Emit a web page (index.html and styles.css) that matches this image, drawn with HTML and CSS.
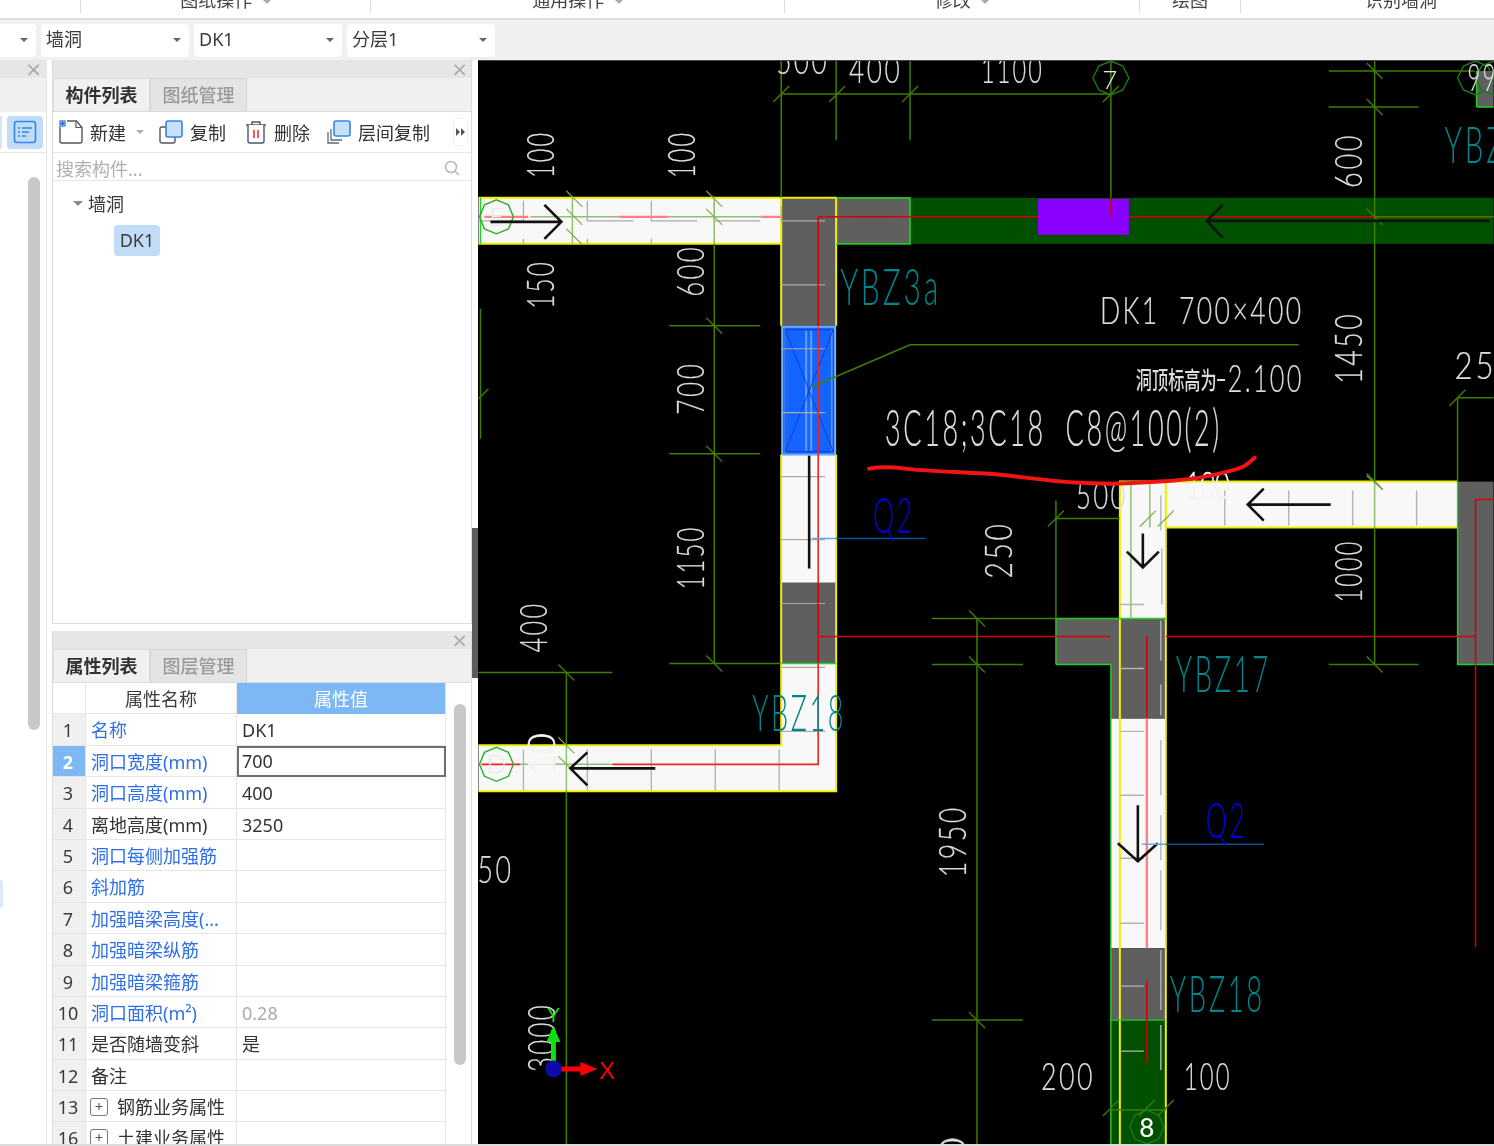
FILE: index.html
```html
<!DOCTYPE html>
<html lang="zh-CN">
<head>
<meta charset="utf-8">
<title>墙洞</title>
<link rel="stylesheet" href="styles.css">
</head>
<body>
<div class="app">
  <header class="ribbon">
    <div class="rgroup g0"></div>
    <div class="rgroup g1"><span class="rlabel">图纸操作 <i class="caret"></i></span></div>
    <div class="rgroup g2"><span class="rlabel">通用操作 <i class="caret"></i></span></div>
    <div class="rgroup g3"><span class="rlabel">修改 <i class="caret"></i></span></div>
    <div class="rgroup g4"><span class="rlabel">绘图</span></div>
    <div class="rgroup g5"><span class="rlabel">识别墙洞</span></div>
  </header>
  <div class="selbar">
    <div class="sel sel0"><i class="caret dark"></i></div>
    <div class="sel"><span>墙洞</span><i class="caret dark"></i></div>
    <div class="sel"><span>DK1</span><i class="caret dark"></i></div>
    <div class="sel"><span>分层1</span><i class="caret dark"></i></div>
  </div>
  <main class="work">
    <aside class="strip">
      <div class="phead strip-head"><span class="close">×</span></div>
      <div class="strip-tabs"></div>
      <div class="strip-tool">
        <span class="sliver"></span>
        <span class="navbtn">
          <svg width="24" height="24" viewBox="0 0 24 24"><rect x="1.5" y="1.5" width="21" height="21" rx="2.5" fill="none" stroke="#2f86f0" stroke-width="1.6"/><path d="M5 8h2M9 8h10M5 12h2M9 12h7M5 16h2M9 16h4" stroke="#2f86f0" stroke-width="1.6" fill="none"/></svg>
        </span>
      </div>
      <div class="strip-body">
        <span class="strip-thumb"></span>
        <span class="strip-mark"></span>
      </div>
    </aside>
    <div class="panels">
      <section class="panel listpanel">
        <div class="phead"><span class="close">×</span></div>
        <div class="tabs"><span class="tab on">构件列表</span><span class="tab">图纸管理</span></div>
        <div class="tools">
          <span class="tool">
            <svg class="ico" width="24" height="24" viewBox="0 0 24 24"><path d="M1 6V21a2 2 0 0 0 2 2H21a2 2 0 0 0 2-2V7.5L17.5 1H8" fill="#fff" stroke="#556" stroke-width="1.4"/><path d="M17 1.5V7.5H23" fill="none" stroke="#556" stroke-width="1.2"/><rect x="0" y="0" width="7" height="7" fill="#8db8f0"/><path d="M1 1l5 5M6 1L1 6M3.5 0v7M0 3.5h7" stroke="#2a6fe0" stroke-width=".8"/></svg>
            新建<i class="caret gap"></i>
          </span>
          <span class="tool">
            <svg class="ico" width="24" height="24" viewBox="0 0 24 24"><rect x="1" y="7" width="15" height="16" rx="2" fill="#fff" stroke="#556" stroke-width="1.4"/><rect x="7" y="1" width="16" height="16" rx="2" fill="#c9dffa" stroke="#2f86f0" stroke-width="1.6"/></svg>
            复制
          </span>
          <span class="tool">
            <svg class="ico" width="22" height="24" viewBox="0 0 22 24"><path d="M1 5H21M7 5V2H15V5" fill="none" stroke="#556" stroke-width="1.4"/><path d="M3 5V21a2 2 0 0 0 2 2H17a2 2 0 0 0 2-2V5" fill="#fff" stroke="#556" stroke-width="1.4"/><path d="M9 10V18M13 10V18" stroke="#e33" stroke-width="1.6"/></svg>
            删除
          </span>
          <span class="tool">
            <svg class="ico" width="24" height="24" viewBox="0 0 24 24"><path d="M1 12V23H12M4 9V20H15" fill="none" stroke="#667" stroke-width="1.3"/><rect x="7" y="1" width="16" height="15" rx="2" fill="#c9dffa" stroke="#2f86f0" stroke-width="1.6"/></svg>
            层间复制
          </span>
          <span class="more"><i></i><i></i></span>
        </div>
        <div class="search">
          <span class="ph">搜索构件...</span>
          <svg width="16" height="16" viewBox="0 0 16 16"><circle cx="7" cy="7" r="5.5" fill="none" stroke="#bbb" stroke-width="1.6"/><path d="M11 11l4 4" stroke="#bbb" stroke-width="1.6"/></svg>
        </div>
        <div class="tree">
          <div class="node"><i class="caret dark"></i>墙洞</div>
          <div class="leaf"><span class="chip">DK1</span></div>
        </div>
      </section>
      <div class="gutter"></div>
      <section class="panel proppanel">
        <div class="phead"><span class="close">×</span></div>
        <div class="tabs"><span class="tab on">属性列表</span><span class="tab">图层管理</span></div>
        <div class="tablewrap">
          <div class="grid">
            <div class="c num hd"></div><div class="c name hd">属性名称</div><div class="c val hdv">属性值</div>
            <div class="c num">1</div><div class="c name blue">名称</div><div class="c val">DK1</div>
            <div class="c num cur">2</div><div class="c name blue">洞口宽度(mm)</div><div class="c val edit">700</div>
            <div class="c num">3</div><div class="c name blue">洞口高度(mm)</div><div class="c val">400</div>
            <div class="c num">4</div><div class="c name">离地高度(mm)</div><div class="c val">3250</div>
            <div class="c num">5</div><div class="c name blue">洞口每侧加强筋</div><div class="c val"></div>
            <div class="c num">6</div><div class="c name blue">斜加筋</div><div class="c val"></div>
            <div class="c num">7</div><div class="c name blue">加强暗梁高度(...</div><div class="c val"></div>
            <div class="c num">8</div><div class="c name blue">加强暗梁纵筋</div><div class="c val"></div>
            <div class="c num">9</div><div class="c name blue">加强暗梁箍筋</div><div class="c val"></div>
            <div class="c num">10</div><div class="c name blue">洞口面积(m²)</div><div class="c val muted">0.28</div>
            <div class="c num">11</div><div class="c name">是否随墙变斜</div><div class="c val">是</div>
            <div class="c num">12</div><div class="c name">备注</div><div class="c val"></div>
            <div class="c num">13</div><div class="c name"><span class="plus">+</span>钢筋业务属性</div><div class="c val"></div>
            <div class="c num">16</div><div class="c name"><span class="plus">+</span>土建业务属性</div><div class="c val"></div>
          </div>
          <div class="vscroll"><span class="thumb"></span></div>
        </div>
      </section>
    </div>
    <div class="split"><span class="grip"></span></div>
    <svg class="cad" width="1016" height="1084" viewBox="478 60 1016 1084" xmlns="http://www.w3.org/2000/svg">
      <rect x="478" y="60" width="1016" height="1086" fill="#000"/>

      <!-- walls: white -->
      <g class="wall">
        <rect x="478" y="197" width="303" height="46"/>
        <path d="M478 745H781V453H836V791H478Z"/>
        <path d="M1166 481H1458V527H1166V618H1120V527 481Z"/>
        <rect x="1111" y="718" width="55" height="230"/>
      </g>
      <!-- grey columns -->
      <g class="col">
        <rect x="781" y="197" width="55" height="128"/>
        <rect x="781" y="582" width="55" height="81"/>
        <path d="M1056 618H1166V718H1111V664H1056Z"/>
        <rect x="1111" y="948" width="55" height="72"/>
        <rect x="1458" y="481" width="36" height="183"/>
        <rect x="1477" y="70" width="17" height="36"/>
      </g>
      <rect class="colg" x="836" y="197" width="74" height="46"/>
      <rect class="beam" x="910" y="197" width="584" height="46"/>
      <rect class="beam" x="1111" y="1020" width="55" height="126"/>
      <rect class="hole" x="1038" y="198" width="91" height="36"/>

      <!-- blue selected door hole -->
      <rect class="sel-hole" x="782" y="326" width="53" height="128"/>
      <path class="sel-light" d="M785 328V452M832 328V452M806 330V450M811 330V450"/>
      <path class="sel-inner" d="M785 329H833V451H785ZM785 329L833 451M833 329L785 451"/>

      <!-- yellow outlines -->
      <path class="yl" d="M478 197H781V243H478M781 197H836V325M781 243V325M781 454V745H478M836 454V791H478M1166 527V481H1458M1166 527H1458M1120 618V481H1166M1120 618V1146M1166 527V1146"/>
      <path class="gr" d="M836 197H910V243H836M910 197V243M782 663H836M1056 664V618H1120M1056 664H1111V1146M1166 618H1120M1166 1020H1111M1458 481V664H1494M1477 106V70M1477 106H1494M480 197V243"/>

      <!-- grey stirrup ticks -->
      <path class="tk" d="M523 200V220H478M587 200V220H633M651 200V220H697M714 200V220H760M781 205V220H825M523 238V243M587 238V243M651 238V243M714 238V243M781 284H825M781 348H825M781 412H825M781 476H825M781 539H825M781 603H825M781 667H825M781 731H825"/>
      <path class="tk2" d="M523 749V790M587 749V790M651 749V790M715 749V790M779 749V790M1225 490V525M1289 490V525M1353 490V525M1417 490V525M1161 495V530M1162 548V604M1161 620V660M1161 684V715M1161 740V795M1161 815V860M1161 870V930M1161 950V1010M1161 1025V1070M1120 604H1144M1120 668H1144M1120 731H1144M1120 795H1144M1120 858H1144M1120 923H1144M1120 986H1144M1120 1051H1144"/>

      <!-- red axis -->
      <path class="rd" d="M818 216H1040M1129 216H1494M818 216V325M818 582V663M1110 636H818M1166 636H1476M1476 499V947M1476 499H1494M1147 636V718M1147 980V1020M1111 198V216"/>
      <path class="rd" d="M1147 1020V1063"/>
      <path class="rb" d="M818 326V582M818 663V764H612"/>
      <path class="pk" d="M484 216H528M619 216H668M761 216H781M1147 718V948"/>
      <path class="rb" d="M481 764H520"/>

      <!-- dimension lines -->
      <path class="dm" d="M781 60V197M836 60V139M910 60V139M781 93H1111M1111 60V197M1375 60V481M1329 70H1475M1329 106H1419M1375 527V664M1329 664H1419M714 325V663M669 325H760M669 453H760M669 663H781M714 243V325M566 672V745M566 791V1146M478 672H612M1056 500V618M1056 518H1120M977 618V1146M932 618H1056M932 664H1023M932 1020H1023M1458 398V481M1458 397H1494M480 308V438M910 344H1299M910 344L812 386M1375 216H1494"/>
      <path class="dml" d="M572 197V243M714 197V243M530 216H619M668 216H761M566 745V791M520 764H612M1131 481V618M1150 481V527M1375 481V527"/>
      <path class="ts" d="M773 101L789 85M829 101L845 85M902 101L918 85M1103 101L1119 85M478 398L488 388M1367 62L1383 78M1367 98L1383 114M1367 208L1383 224M1367 473L1383 489M1367 656L1383 672M706 317L722 333M706 445L722 461M706 655L722 671M558 664L574 680M969 610L985 626M969 656L985 672M969 1012L985 1028M1450 405L1466 389M1048 526L1064 510"/>
      <path class="tsl" d="M566 190L582 206M566 228L582 244M566 208L582 224M706 190L722 206M706 208L722 224M558 756L574 772M558 737L574 753M1140 526L1156 510M1158 526L1174 510M1367 475L1383 489"/>
      <path class="ts" d="M1103 1116L1119 1100M1139 1116L1155 1100M1158 1116L1174 1100M1111 1110H1166"/>

      <!-- axis bubbles -->
      <polygon class="bub" points="496,199 508,204 513,216 508,228 496,233 484,228 479,216 484,204"/>
      <polygon class="bub" points="496,747 508,752 513,764 508,776 496,781 484,776 479,764 484,752"/>
      <polygon class="bubd" points="1111,60 1123,65 1129,77 1123,89 1111,94 1099,89 1093,77 1099,65"/>
      <polygon class="bubd" points="1476,60 1488,65 1494,77 1488,89 1476,94 1464,89 1458,77 1464,65"/>
      <polygon class="bubd" points="1494,60 1506,65 1512,77 1506,89 1494,94 1482,89 1476,77 1482,65"/>
      <polygon class="bubd" points="1147,1110 1159,1115 1164,1127 1159,1139 1147,1144 1135,1139 1130,1127 1135,1115"/>
      <text class="tb" x="496" y="225" text-anchor="middle">E</text>
      <text class="tb" x="496" y="773" text-anchor="middle">D</text>
      <text class="tb" x="1110" y="88" text-anchor="middle">7</text>
      <text class="tb bold" x="1147" y="1137" text-anchor="middle">8</text>
      <text class="dim" x="1468" y="90" textLength="30" lengthAdjust="spacingAndGlyphs">99</text>

      <!-- direction arrows -->
      <path class="ar" d="M490 221H560M544 204L561 221L544 238"/>
      <path class="ar" d="M570 768H655M587 752L570 768L587 785"/>
      <path class="ar" d="M1490 220H1207M1223 204L1207 220L1223 237"/>
      <path class="ar" d="M1331 504H1248M1264 488L1248 504L1264 520"/>
      <path class="ar" d="M809 455V568"/>
      <path class="ar" d="M1143 533V567M1127 551L1143 567L1159 551"/>
      <path class="ar" d="M1138 805V861M1118 843L1138 861L1158 843"/>

      <!-- leaders -->
      <path class="bl" d="M836 538H925M1166 844H1264"/>
      <path class="bll" d="M812 538H836M1142 844H1166"/>

      <!-- texts -->
      <g class="dims">
        <text class="dim" x="776" y="73" textLength="53" lengthAdjust="spacingAndGlyphs">500</text>
        <text class="dim" x="849" y="82" textLength="53" lengthAdjust="spacingAndGlyphs">400</text>
        <text class="dim" x="981" y="82" textLength="63" lengthAdjust="spacingAndGlyphs">1100</text>
        <text class="dim" transform="translate(554 177) rotate(-90)" textLength="47" lengthAdjust="spacingAndGlyphs">100</text>
        <text class="dim" transform="translate(695 177) rotate(-90)" textLength="47" lengthAdjust="spacingAndGlyphs">100</text>
        <text class="dim" transform="translate(554 308) rotate(-90)" textLength="49" lengthAdjust="spacingAndGlyphs">150</text>
        <text class="dim" transform="translate(704 296) rotate(-90)" textLength="52" lengthAdjust="spacingAndGlyphs">600</text>
        <text class="dim" transform="translate(704 414) rotate(-90)" textLength="53" lengthAdjust="spacingAndGlyphs">700</text>
        <text class="dim" transform="translate(704 589) rotate(-90)" textLength="64" lengthAdjust="spacingAndGlyphs">1150</text>
        <text class="dim" transform="translate(547 652) rotate(-90)" textLength="51" lengthAdjust="spacingAndGlyphs">400</text>
        <text class="dim" transform="translate(1362 187) rotate(-90)" textLength="55" lengthAdjust="spacingAndGlyphs">600</text>
        <text class="dim" transform="translate(1362 383) rotate(-90)" textLength="72" lengthAdjust="spacingAndGlyphs">1450</text>
        <text class="dim" transform="translate(1362 602) rotate(-90)" textLength="63" lengthAdjust="spacingAndGlyphs">1000</text>
        <text class="dim" transform="translate(1012 578) rotate(-90)" textLength="57" lengthAdjust="spacingAndGlyphs">250</text>
        <text class="dim" transform="translate(966 877) rotate(-90)" textLength="72" lengthAdjust="spacingAndGlyphs">1950</text>
        <text class="dim" transform="translate(966 1163) rotate(-90)" textLength="30" lengthAdjust="spacingAndGlyphs">0</text>
        <text class="dim" transform="translate(555 1072) rotate(-90)" textLength="69" lengthAdjust="spacingAndGlyphs">3000</text>
        <text class="dim" x="1455" y="378" textLength="42" lengthAdjust="spacingAndGlyphs">25</text>
        <text class="dim" x="1076" y="508" textLength="52" lengthAdjust="spacingAndGlyphs">500</text>
        <text class="dim" x="477" y="883" textLength="36" lengthAdjust="spacingAndGlyphs">50</text>
        <text class="dim" x="1041" y="1090" textLength="54" lengthAdjust="spacingAndGlyphs">200</text>
        <text class="dim" x="1184" y="1090" textLength="48" lengthAdjust="spacingAndGlyphs">100</text>
        <text class="dim" x="1100" y="323" textLength="204" lengthAdjust="spacingAndGlyphs">DK1&#160;&#160;700×400</text>
        <text class="dim" x="1228" y="391" textLength="76" lengthAdjust="spacingAndGlyphs">2.100</text>
        <text class="cn" x="1136" y="388" textLength="90" lengthAdjust="spacingAndGlyphs">洞顶标高为−</text>
        <text class="dim big" x="885" y="445" textLength="337" lengthAdjust="spacingAndGlyphs">3C18;3C18&#160;&#160;C8@100(2)</text>
      </g>
      <text class="faint" transform="translate(555 775) rotate(-90)" textLength="42" lengthAdjust="spacingAndGlyphs">10</text>
      <text class="faint" x="1186" y="498" textLength="44" lengthAdjust="spacingAndGlyphs">100</text>
      <g class="teal">
        <text x="840" y="304" textLength="101" lengthAdjust="spacingAndGlyphs">YBZ3a</text>
        <text x="752" y="731" textLength="94" lengthAdjust="spacingAndGlyphs">YBZ18</text>
        <text x="1176" y="692" textLength="95" lengthAdjust="spacingAndGlyphs">YBZ17</text>
        <text x="1170" y="1012" textLength="95" lengthAdjust="spacingAndGlyphs">YBZ18</text>
        <text x="1445" y="162" textLength="62" lengthAdjust="spacingAndGlyphs">YBZ</text>
      </g>
      <g class="q2">
        <text x="873" y="532" textLength="41" lengthAdjust="spacingAndGlyphs">Q2</text>
        <text x="1206" y="838" textLength="41" lengthAdjust="spacingAndGlyphs">Q2</text>
      </g>

      <!-- UCS -->
      <path class="axg" d="M553 1069V1030"/>
      <path class="axgf" d="M553 1026L560 1042H546Z"/>
      <path class="axr" d="M553 1069H585"/>
      <path class="axrf" d="M597 1069L580 1062V1076Z"/>
      <circle class="axo" cx="553" cy="1069" r="8.5"/>
      <text class="ylabel" x="553" y="1022" text-anchor="middle">Y</text>
      <text class="xlabel" x="607" y="1079" text-anchor="middle">X</text>

      <!-- hand markup -->
      <path class="ink" d="M869 468C880 466 890 466 905 468S950 471 985 473 1040 480 1075 482 1130 483 1160 481 1205 477 1228 471 1248 462 1255 457"/>
    </svg>
  </main>
</div>
</body>
</html>
```
FILE: styles.css
```css
* { box-sizing: border-box; }
html, body { margin: 0; padding: 0; height: 100%; overflow: hidden; background: #fff; }
body { font-family: "Noto Sans", "Noto Sans CJK SC", sans-serif; font-size: 18px; color: #333; }
.app { width: 1494px; height: 1146px; display: flex; flex-direction: column; padding-bottom: 2px; background: #dcdcdc; filter: blur(.35px); }

/* ribbon */
.ribbon { height: 20px; flex: none; display: flex; background: #fff; border-bottom: 2px solid #dedede; overflow: hidden; }
.rgroup { flex: none; height: 13px; border-right: 1px solid #ddd; display: flex; justify-content: center; overflow: hidden; }
.g0 { width: 81px; }
.g1 { width: 290px; }
.g2 { width: 414px; }
.g3 { width: 355px; }
.g4 { width: 101px; }
.g5 { width: 320px; border-right: 0; }
.rlabel { font-size: 18px; line-height: 20px; margin-top: -10px; white-space: nowrap; color: #444; }
.caret { display: inline-block; width: 0; height: 0; border-left: 4px solid transparent; border-right: 4px solid transparent; border-top: 4px solid #aaa; vertical-align: middle; margin-left: 6px; }
.caret.dark { border-top-color: #666; }
.caret.gap { margin-left: 10px; }

/* selector bar */
.selbar { height: 40px; flex: none; background: #f0f0f0; display: flex; align-items: center; gap: 5px; padding-left: 0; }
.sel { width: 148px; height: 33px; background: #fff; border-radius: 4px; display: flex; align-items: center; justify-content: space-between; padding: 0 8px 1px 5px; line-height: 31px; color: #3a3a3a; }
.sel0 { width: 36px; justify-content: flex-end; border-radius: 0 4px 4px 0; }

/* workspace */
.work { flex: 1; display: flex; min-height: 0; background: #fff; }
.strip { width: 47px; flex: none; display: flex; flex-direction: column; border-right: 1px solid #e4e4e4; background: #fff; }
.phead { height: 18px; flex: none; background: #e6e6e6; display: flex; justify-content: flex-end; align-items: center; padding-right: 3px; }
.strip-head { padding-right: 4px; }
.close { font-size: 20px; line-height: 18px; color: #aaa; font-family: "DejaVu Sans", sans-serif; }
.strip-tabs { height: 34px; flex: none; background: #f0f0f0; }
.strip-tool { height: 41px; flex: none; display: flex; align-items: center; justify-content: flex-end; padding-right: 3px; position: relative; border-bottom: 1px solid #e6e6e6; }
.navbtn { width: 36px; height: 33px; background: #c3dcf5; border-radius: 4px; display: flex; align-items: center; justify-content: center; }
.sliver { position: absolute; left: 0; top: 4px; width: 2px; height: 33px; background: #d6e6f8; }
.strip-body { flex: 1; position: relative; }
.strip-thumb { position: absolute; left: 28px; top: 24px; width: 12px; height: 553px; background: #c8c8c8; border-radius: 6px; }
.strip-mark { position: absolute; left: 0; top: 727px; width: 3px; height: 28px; background: #dbe9fb; border-radius: 0 3px 3px 0; }

.panels { width: 420px; margin-left: 5px; flex: none; display: flex; flex-direction: column; }
.panel { display: flex; flex-direction: column; border-left: 1px solid #dcdcdc; border-right: 1px solid #dcdcdc; }
.listpanel { height: 564px; flex: none; border-bottom: 1px solid #dcdcdc; }
.gutter { height: 7px; flex: none; background: #fff; }
.proppanel { flex: 1; min-height: 0; overflow: hidden; }
.tabs { height: 34px; flex: none; background: #f0f0f0; display: flex; border-bottom: 1px solid #dcdcdc; }
.tab { width: 97px; text-align: center; line-height: 32px; color: #999; background: #e4e4e4; border: 1px solid #d4d4d4; border-bottom: 0; font-weight: 500; }
.tab.on { background: #f0f0f0; color: #333; font-weight: 700; border-color: #dcdcdc; }

.tools { height: 41px; flex: none; display: flex; align-items: center; padding-left: 6px; background: #fff; border-bottom: 1px solid #e6e6e6; }
.tool { display: inline-flex; align-items: center; white-space: nowrap; margin-right: 19px; color: #333; }
.tool:first-child { margin-right: 15px; }
.tool:nth-child(3) { margin-right: 17px; }
.tool:nth-child(4) { margin-right: 0; }
.ico { margin-right: 7px; flex: none; }
.more { margin-left: auto; margin-right: 3px; width: 15px; height: 28px; border: 1px solid #eee; border-radius: 5px; display: flex; align-items: center; justify-content: center; gap: 1px; }
.more i { width: 0; height: 0; border-top: 4px solid transparent; border-bottom: 4px solid transparent; border-left: 4px solid #555; }

.search { height: 28px; flex: none; display: flex; align-items: center; justify-content: space-between; padding: 2px 11px 0 3px; border-bottom: 1px solid #e6e6e6; }
.ph { color: #b0b0b0; }
.tree { flex: 1; background: #fff; padding-left: 20px; }
.node { height: 44px; display: flex; align-items: center; color: #3a3a3a; }
.node .caret { margin: 0 5px 0 0; border-left-width: 5px; border-right-width: 5px; border-top-width: 5px; border-top-color: #888; }
.leaf { padding-left: 41px; }
.chip { display: inline-block; width: 46px; height: 31px; line-height: 31px; text-align: center; background: #c3dcf5; border-radius: 4px; color: #3a3a3a; }

/* property grid */
.tablewrap { flex: 1; min-height: 0; display: flex; overflow: hidden; }
.grid { width: 393px; flex: none; display: grid; grid-template-columns: 33px 151px 209px; grid-auto-rows: 31.4px; align-content: start; }
.c { border-right: 1px solid #e6e6e6; border-bottom: 1px solid #e6e6e6; line-height: 31px; padding-top: 1px; white-space: nowrap; overflow: hidden; color: #333; }
.num { background: #f0f0f0; text-align: center; color: #3a3a3a; padding-right: 2px; }
.num.hd { background: #fff; }
.name { padding-left: 5px; }
.name.hd { text-align: center; color: #3a3a3a; padding-left: 0; }
.val { padding-left: 5px; }
.hdv { background: #7db8f5; color: #fff; text-align: center; padding-left: 0; border-bottom: 0; }
.blue { color: #2f6fe4; }
.cur { background: #7db8f5; color: #fff; font-weight: 700; }
.edit { border: 2px solid #6e6e6e; padding: 0 0 0 3px; line-height: 27px; }
.muted { color: #aaa; }
.plus { display: inline-block; width: 18px; height: 18px; border: 1px solid #777; border-radius: 3px; line-height: 14px; text-align: center; font-size: 15px; margin: 0 9px 0 -1px; vertical-align: 2px; color: #555; }
.vscroll { flex: 1; position: relative; }
.thumb { position: absolute; left: 8px; top: 21px; width: 12px; height: 361px; background: #c8c8c8; border-radius: 6px; }

.split { width: 6px; flex: none; background: #fff; position: relative; }
.grip { position: absolute; left: 0; top: 468px; width: 6px; height: 150px; background: #5c5c5c; }

/* CAD drawing */
.cad { display: block; flex: none; background: #000; border-top: 1px solid #444; }
.wall { fill: #f8f8f8; }
.col { fill: #5f5f5f; }
.colg { fill: #5f5f5f; stroke: #1fc41f; stroke-width: 1.2; }
.beam { fill: #005000; }
.hole { fill: #8a00ff; }
.sel-hole { fill: #1464ff; stroke: #6fb1ff; stroke-width: 2; }
.sel-light { fill: none; stroke: #5f9fff; stroke-width: 2; }
.sel-inner { fill: none; stroke: #0a3fd0; stroke-width: 1; }
.yl { fill: none; stroke: #f0f000; stroke-width: 2; }
.gr { fill: none; stroke: #1fd41f; stroke-width: 1.4; }
.tk { fill: none; stroke: #aaa; stroke-width: 1.2; }
.tk2 { fill: none; stroke: #b4b4b4; stroke-width: 1.4; }
.rd { fill: none; stroke: #d80000; stroke-width: 1.5; }
.rb { fill: none; stroke: #f62020; stroke-width: 1.6; }
.pk { fill: none; stroke: #ff8080; stroke-width: 2.4; }
.dm { fill: none; stroke: #3f7d00; stroke-width: 1.5; }
.dml { fill: none; stroke: #93c070; stroke-width: 1.5; }
.ts { fill: none; stroke: #3f7d00; stroke-width: 1.4; }
.tsl { fill: none; stroke: #7fb050; stroke-width: 1.3; }
.bub { fill: none; stroke: #2eaa2e; stroke-width: 1.4; }
.bubd { fill: none; stroke: #1e7a1e; stroke-width: 1.4; }
.ar { fill: none; stroke: #111; stroke-width: 2.6; }
.bl { fill: none; stroke: #0a4fa0; stroke-width: 1.4; }
.bll { fill: none; stroke: #5fa8f0; stroke-width: 1.4; }
.dim { font-family: "Lato", "Open Sans", sans-serif; font-weight: 300; font-size: 38px; letter-spacing: 3.5px; fill: #dcdcdc; stroke: #dcdcdc; stroke-width: .25; }
.dim.big { font-size: 52px; letter-spacing: 5px; }
.cn { font-family: "Noto Sans CJK SC", sans-serif; font-size: 24px; fill: #ddd; font-weight: 500; }
.faint { font-family: "Lato", sans-serif; font-weight: 300; font-size: 38px; fill: #fff; stroke: #e8e8e8; stroke-width: .6; }
.tb { font-family: "Lato", sans-serif; font-size: 26px; fill: #e8e8e8; font-weight: 300; }
.tb.bold { font-weight: 500; fill: #fff; }
.teal text { font-family: "Lato", sans-serif; font-weight: 300; font-size: 52px; letter-spacing: 5px; fill: #00858a; }
.q2 text { font-family: "Lato", sans-serif; font-weight: 300; font-size: 50px; letter-spacing: 4px; fill: #0000e0; }
.axg { fill: none; stroke: #10e010; stroke-width: 5; }
.axgf { fill: #10e010; }
.axr { fill: none; stroke: #f00; stroke-width: 5; }
.axrf { fill: #f00; }
.axo { fill: #0b0ba8; }
.ylabel { font-family: "Liberation Sans", sans-serif; font-size: 20px; fill: #10e010; }
.xlabel { font-family: "Liberation Sans", sans-serif; font-size: 24px; fill: #f00; }
.ink { fill: none; stroke: #f21414; stroke-width: 4; stroke-linecap: round; stroke-linejoin: round; }
```
